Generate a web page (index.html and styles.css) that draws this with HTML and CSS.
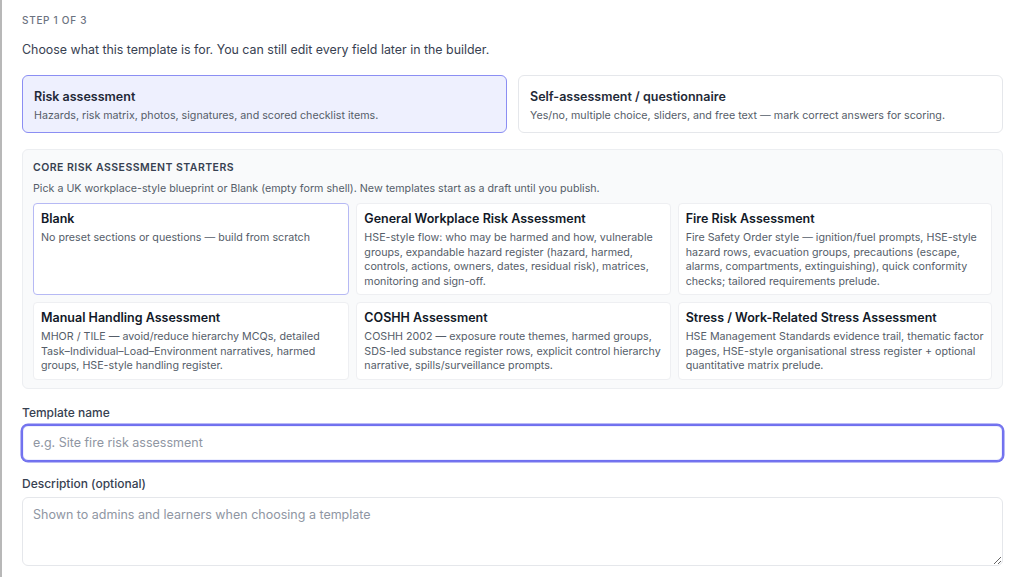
FILE: index.html
```html
<!DOCTYPE html>
<html lang="en">
<head>
<meta charset="utf-8">
<title>New template</title>
<link rel="stylesheet" href="styles.css">
</head>
<body>
<div class="page">
  <div class="step">Step 1 of 3</div>
  <p class="intro">Choose what this template is for. You can still edit every field later in the builder.</p>

  <div class="types">
    <div class="type-card selected">
      <div class="type-title">Risk assessment</div>
      <div class="type-desc">Hazards, risk matrix, photos, signatures, and scored checklist items.</div>
    </div>
    <div class="type-card">
      <div class="type-title">Self-assessment / questionnaire</div>
      <div class="type-desc">Yes/no, multiple choice, sliders, and free text — mark correct answers for scoring.</div>
    </div>
  </div>

  <section class="starters">
    <div class="starters-head">Core risk assessment starters</div>
    <div class="starters-sub">Pick a UK workplace-style blueprint or Blank (empty form shell). New templates start as a draft until you publish.</div>
    <div class="starter-grid">
      <div class="starter selected">
        <div class="starter-title">Blank</div>
        <div class="starter-desc">No preset sections or questions — build from scratch</div>
      </div>
      <div class="starter">
        <div class="starter-title">General Workplace Risk Assessment</div>
        <div class="starter-desc">HSE-style flow: who may be harmed and how, vulnerable groups, expandable hazard register (hazard, harmed, controls, actions, owners, dates, residual risk), matrices, monitoring and sign-off.</div>
      </div>
      <div class="starter">
        <div class="starter-title">Fire Risk Assessment</div>
        <div class="starter-desc">Fire Safety Order style — ignition/fuel prompts, HSE-style hazard rows, evacuation groups, precautions (escape, alarms, compartments, extinguishing), quick conformity checks; tailored requirements prelude.</div>
      </div>
      <div class="starter">
        <div class="starter-title">Manual Handling Assessment</div>
        <div class="starter-desc">MHOR / TILE — avoid/reduce hierarchy MCQs, detailed Task–Individual–Load–Environment narratives, harmed groups, HSE-style handling register.</div>
      </div>
      <div class="starter">
        <div class="starter-title">COSHH Assessment</div>
        <div class="starter-desc">COSHH 2002 — exposure route themes, harmed groups, SDS-led substance register rows, explicit control hierarchy narrative, spills/surveillance prompts.</div>
      </div>
      <div class="starter">
        <div class="starter-title">Stress / Work-Related Stress Assessment</div>
        <div class="starter-desc">HSE Management Standards evidence trail, thematic factor pages, HSE-style organisational stress register + optional quantitative matrix prelude.</div>
      </div>
    </div>
  </section>

  <label class="field-label" for="tname">Template name</label>
  <input id="tname" class="text-input focused" type="text" placeholder="e.g. Site fire risk assessment">

  <label class="field-label desc-label" for="tdesc">Description (optional)</label>
  <textarea id="tdesc" class="text-area" placeholder="Shown to admins and learners when choosing a template"></textarea>
</div>
</body>
</html>
```

FILE: styles.css
```css
* { box-sizing: border-box; }
html, body { margin: 0; padding: 0; background: #ffffff; }
body {
  font-family: Inter, "Noto Sans", "Liberation Sans", sans-serif;
  color: #111827;
  -webkit-font-smoothing: antialiased;
}
.page {
  border-left: 2px solid #b8b8b8;
  min-height: 577px;
  padding: 13px 21px 0 20px;
  display: flex;
  flex-direction: column;
}
.step {
  font-size: 10px;
  line-height: 14px;
  letter-spacing: 0.07em;
  text-transform: uppercase;
  color: #6b7280;
  font-weight: 500;
}
.intro {
  margin: 14px 0 0;
  font-size: 12.4px;
  line-height: 18px;
  color: #374151;
}
.types {
  margin-top: 16px;
  display: grid;
  grid-template-columns: 1fr 1fr;
  gap: 11px;
}
.type-card {
  border: 1px solid #e5e7eb;
  border-radius: 6px;
  background: #fff;
  padding: 12px 11px 8px;
  height: 58px;
}
.type-card.selected {
  border: 1.5px solid #8b8ef3;
  background: #eef0fe;
}
.type-title {
  font-size: 12.5px;
  line-height: 17px;
  font-weight: 600;
  color: #1f2937;
}
.type-desc {
  margin-top: 4px;
  font-size: 10.7px;
  line-height: 14px;
  color: #555d69;
}
.starters {
  margin-top: 16px;
  border: 1px solid #eceef1;
  border-radius: 6px;
  background: #f9fafb;
  padding: 11px 10px 8px;
}
.starters-head {
  font-size: 10.5px;
  line-height: 14px;
  font-weight: 600;
  letter-spacing: 0.045em;
  text-transform: uppercase;
  color: #374151;
}
.starters-sub {
  margin-top: 7px;
  font-size: 10.7px;
  line-height: 14px;
  color: #555d69;
}
.starter-grid {
  margin-top: 7px;
  display: grid;
  grid-template-columns: 316fr 314fr 314fr;
  gap: 7px;
}
.starter {
  background: #fff;
  border: 1px solid #eeeff2;
  border-radius: 4px;
  padding: 6px 7px 5px;
}
.starter.selected {
  border: 1px solid #b6b9f4;
}
.starter-title {
  font-size: 12.5px;
  line-height: 17px;
  font-weight: 600;
  color: #111827;
}
.starter-desc {
  margin-top: 4px;
  font-size: 10.7px;
  line-height: 14.5px;
  color: #555d69;
}
.field-label {
  display: block;
  margin-top: 15px;
  font-size: 12px;
  line-height: 17px;
  font-weight: 500;
  color: #374151;
}
.desc-label { margin-top: 14px; }
.text-input {
  margin: 4px 0 0;
  width: 100%;
  height: 36px;
  border: 1px solid #e5e7eb;
  border-radius: 6px;
  padding: 0 10px;
  font-family: inherit;
  font-size: 12.5px;
  color: #111827;
  background: #fff;
  outline: none;
}
.text-input.focused {
  border-color: #6f6ff0;
  box-shadow: 0 0 0 1.5px #7474ee, inset 0 0 0 1px #eef0fe;
}
.text-input::placeholder, .text-area::placeholder { color: #8f96a3; }
.text-area {
  margin: 5px 0 0;
  width: 100%;
  height: 69px;
  border: 1px solid #e5e7eb;
  border-radius: 6px;
  padding: 9px 10px;
  font-family: inherit;
  font-size: 12.5px;
  line-height: 16px;
  color: #111827;
  background: #fff;
  resize: vertical;
  outline: none;
}
```
